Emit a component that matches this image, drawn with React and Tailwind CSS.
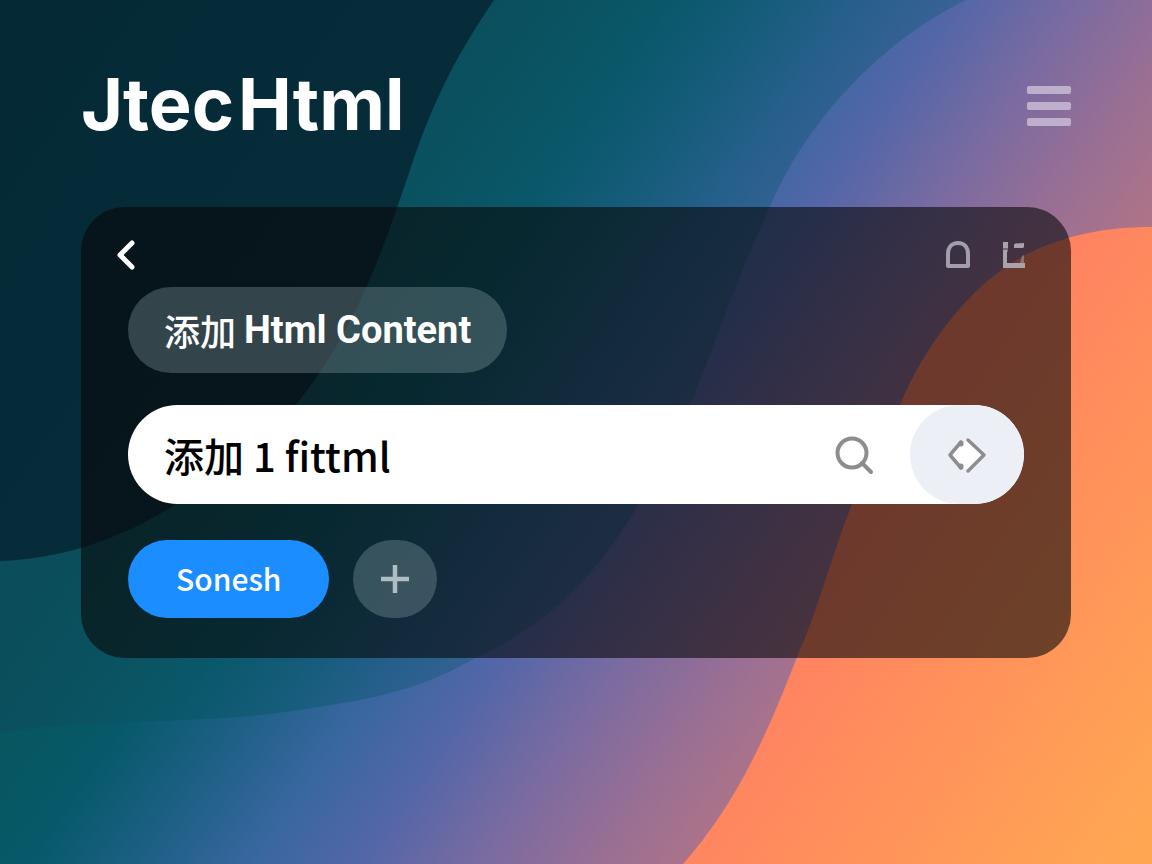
import React from "react";

function Backdrop() {
  return (
    <svg
      className="absolute inset-0 h-full w-full"
      viewBox="0 0 1152 864"
      preserveAspectRatio="none"
      aria-hidden="true"
    >
      <defs>
        <linearGradient id="dark" gradientUnits="userSpaceOnUse" x1="0" y1="0" x2="380" y2="264">
          <stop offset="0" stopColor="#052a36" />
          <stop offset="1" stopColor="#062c3a" />
        </linearGradient>
        <linearGradient id="teal" gradientUnits="userSpaceOnUse" x1="0" y1="0" x2="820" y2="570">
          <stop offset="0.37" stopColor="#0b4d5a" />
          <stop offset="0.48" stopColor="#0a5362" />
          <stop offset="0.55" stopColor="#09586a" />
          <stop offset="0.63" stopColor="#155c7a" />
          <stop offset="0.7" stopColor="#255f8a" />
          <stop offset="0.79" stopColor="#3a6295" />
        </linearGradient>
        <linearGradient id="violet" gradientUnits="userSpaceOnUse" x1="0" y1="0" x2="984" y2="684">
          <stop offset="0.35" stopColor="#07565f" />
          <stop offset="0.43" stopColor="#07596a" />
          <stop offset="0.5" stopColor="#1b5f83" />
          <stop offset="0.585" stopColor="#3967a0" />
          <stop offset="0.655" stopColor="#5266a8" />
          <stop offset="0.74" stopColor="#7a6ba1" />
          <stop offset="0.82" stopColor="#996f94" />
          <stop offset="0.9" stopColor="#b07486" />
        </linearGradient>
        <linearGradient id="orange" gradientUnits="userSpaceOnUse" x1="850" y1="560" x2="1170" y2="780">
          <stop offset="0" stopColor="#ff8261" />
          <stop offset="1" stopColor="#ffa653" />
        </linearGradient>
      </defs>
      <rect width="1152" height="864" fill="url(#violet)" />
      <path
        fill="url(#teal)"
        d="M0 0H966C875 45 805 125 770 207C732 290 715 345 690 405C665 465 660 480 639 504C590 585 545 625 477 657C430 685 380 698 331 705C250 720 190 719 110 723C60 725 35 727 0 733Z"
      />
      <path
        fill="url(#dark)"
        d="M0 0H494C452 62 435 100 415 155C405 185 400 200 392 222C368 290 340 350 298 402C255 455 215 485 176 504C120 540 60 559 0 561Z"
      />
      <path
        fill="url(#orange)"
        d="M1152 227C1105 227 1065 235 1025 255C970 285 925 345 900 405C880 445 868 475 852 504C832 555 818 610 797 657C765 740 735 805 683 864H1152Z"
      />
    </svg>
  );
}

export default function App() {
  return (
    <div className="relative min-h-screen overflow-hidden bg-[#052b37] font-['Noto_Sans_CJK_SC',sans-serif]">
      <Backdrop />
      <div className="relative flex flex-col gap-[59px] px-[81px] pt-16 pb-20">
        <header className="flex h-21 items-center justify-between">
          <h1 className="flex gap-1 pb-1 font-[Inter,sans-serif] text-7xl font-bold text-white">
            <span>Jtec</span> <span>Html</span>
          </h1>
          <button type="button" aria-label="Menu" className="flex w-11 flex-col gap-2">
            <span className="h-2 rounded-xs bg-[#beb0cc]" />
            <span className="h-2 rounded-xs bg-[#beb0cc]" />
            <span className="h-2 rounded-xs bg-[#beb0cc]" />
          </button>
        </header>

        <main className="rounded-[44px] bg-[#070707]/59 px-[47px] pt-7 pb-10">
          <div className="-mr-1 -ml-4 flex h-10 items-center justify-between">
            <button type="button" aria-label="Back">
              <svg width="26" height="34" viewBox="0 0 26 34" fill="none" stroke="#fff" strokeWidth="5" strokeLinecap="round" strokeLinejoin="round">
                <path d="M20 5L8 17L20 29" />
              </svg>
            </button>
            <div className="flex gap-7">
              <button type="button" aria-label="Notifications">
                <svg width="28" height="30" viewBox="0 0 28 30" fill="none" stroke="#a29eab" strokeWidth="4" strokeLinejoin="round">
                  <path d="M4 26V14C4 7 8 3 14 3S24 7 24 14V26Z" />
                </svg>
              </button>
              <button type="button" aria-label="Layout">
                <svg width="28" height="30" viewBox="0 0 28 30" fill="#aaa2ab">
                  <path d="M3 2H8V8H3ZM15 3.500L24 3V7L23 8H14V5ZM3 10H7V23H25V28H3Z" />
                  <path d="M3 8H8V12H6L3 10Z" opacity=".5" />
                  <path d="M22 16L24 15V23H20Z" opacity=".55" />
                </svg>
              </button>
            </div>
          </div>

          <div className="mt-3 flex">
            <h2 className="flex h-[86px] items-center gap-2 rounded-full bg-[#8fa6ae]/33 px-9 text-4xl font-bold text-white">
              <span className="font-medium">添加</span>{" "}
              <span className="font-[Roboto,sans-serif] text-[38px]">Html Content</span>
            </h2>
          </div>

          <form className="mt-8 flex h-[99px] items-center overflow-hidden rounded-full bg-white" onSubmit={(e) => e.preventDefault()}>
            <input
              type="text"
              aria-label="Content"
              defaultValue="添加 1 fittml"
              className="h-full min-w-0 flex-1 bg-transparent pl-9 text-[40px] font-medium text-black outline-none"
            />
            <button type="submit" aria-label="Search" className="mr-9">
              <svg width="40" height="40" viewBox="0 0 40 40" fill="none" stroke="#8d8d8d" strokeWidth="4" strokeLinecap="round">
                <circle cx="18" cy="18" r="14.500" />
                <path d="M28 28L37 37" />
              </svg>
            </button>
            <button type="button" aria-label="Code" className="flex h-full w-[114px] items-center justify-center rounded-full bg-[#ecf0f6]">
              <svg width="40" height="40" viewBox="0 0 40 40" fill="none" stroke="#8b8d90" strokeWidth="3.500" strokeLinecap="round" strokeLinejoin="round">
                <path d="M17 8L21 5L37 20L21 35L16 33L3 20Z" fill="#fff" stroke="none" />
                <path d="M14 7L3 20L14 33M21 5L37 20L21 36" />
                <path d="M14 9V8M14 31V32" strokeWidth="5" />
              </svg>
            </button>
          </form>

          <div className="mt-9 flex gap-6">
            <button type="button" className="h-[78px] rounded-full bg-[#1c8dff] px-12 pb-0.5 text-3xl font-medium text-white">
              Sonesh
            </button>
            <button type="button" aria-label="Add" className="flex h-[78px] w-21 items-center justify-center rounded-full bg-[#8fa6ae]/33">
              <svg width="28" height="28" viewBox="0 0 28 28" stroke="#afbdc5" strokeWidth="4.500">
                <path d="M14 0V28M0 14H28" />
              </svg>
            </button>
          </div>
        </main>
      </div>
    </div>
  );
}
